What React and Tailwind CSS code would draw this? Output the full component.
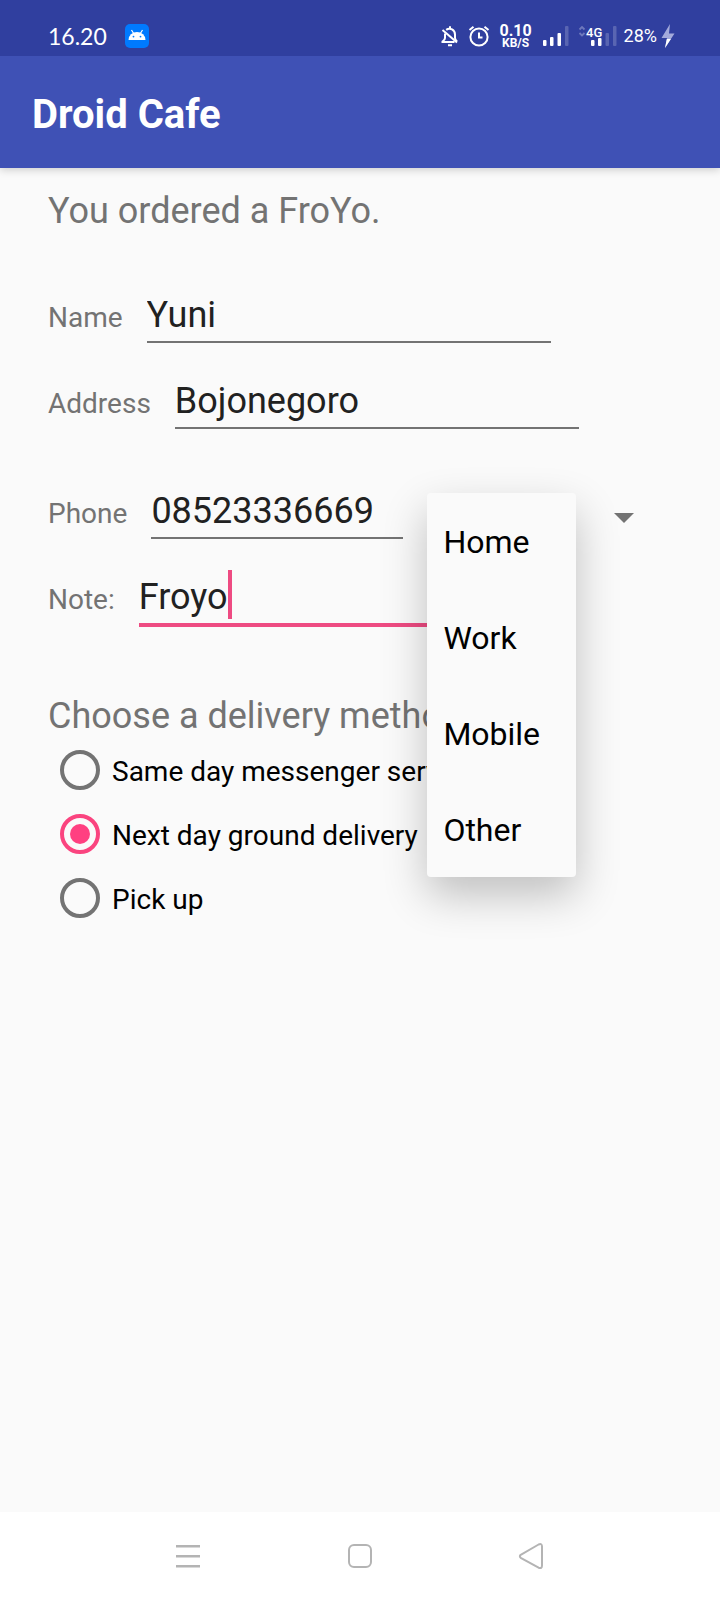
import React, { useState } from 'react';

function StatusBar() {
  return (
    <div className="flex h-14 items-center justify-between bg-[#303f9f] pt-4 pr-[45px] pl-12 text-white">
      <div className="flex items-center gap-[17px]">
        <span className="font-[Lato,sans-serif] text-[23px] leading-6">16.20</span>
        <svg width="26" height="26" viewBox="0 0 26 26" aria-hidden="true">
          <rect x="1" y="1" width="24" height="24" rx="5" fill="#007aff" />
          <path d="M7.500 7l2 3.200M18.500 7l-2 3.200" stroke="#fff" strokeWidth="1.200" />
          <path d="M4.500 17a8.500 8 0 0 1 17 0z" fill="#fff" />
          <circle cx="9.500" cy="13.600" r="0.900" fill="#007aff" />
          <circle cx="16.500" cy="13.600" r="0.900" fill="#007aff" />
        </svg>
      </div>

      <div className="flex items-center">
        <svg width="20" height="22" viewBox="0 0 20 22" fill="none" stroke="#fff" strokeWidth="2" aria-hidden="true">
          <path d="M6.200 4.900C10 2 15 5 15 9.500v3.500c0 1.500 1 2.500 2 3.500M5 8.500v4.500c0 1.800-1.200 2.700-2.500 3.500v.4H14.500" />
          <path d="M2.500 5l14.500 12.500" />
          <path d="M10 3.500V1.300M8 20.200h4" />
        </svg>
        <svg className="ml-2" width="22" height="22" viewBox="0 0 22 22" fill="none" stroke="#fff" strokeWidth="2" aria-hidden="true">
          <circle cx="11" cy="12" r="8.600" />
          <path d="M11 7.500V12.600h3.500M1.500 5L5.500 1.700M20.500 5L16.500 1.700" />
        </svg>
        <div className="ml-2.5 flex w-8 flex-col items-center font-[Roboto,sans-serif] font-bold">
          <span className="text-base leading-[14px]">0.10</span>
          <span className="text-xs leading-[10px]">KB/S</span>
        </div>
        <svg className="ml-2.5" width="28" height="22" viewBox="0 0 28 22" fill="#fff" aria-hidden="true">
          <rect x="1" y="15" width="3.500" height="6" rx="1" />
          <rect x="8" y="12" width="3.500" height="9" rx="1" />
          <rect x="15.500" y="8" width="3.500" height="13" rx="1" />
          <rect x="23" y="1" width="3.500" height="20" rx="1" opacity="0.2" />
        </svg>
        <svg className="ml-2" width="40" height="22" viewBox="0 0 40 22" fill="#fff" aria-hidden="true">
          <path d="M1.500 4.500l2.500-2.500 2.500 2.500M1.500 8l2.500 2.500 2.500-2.500" fill="none" stroke="#fff" strokeWidth="1.800" opacity="0.3" />
          <text x="8" y="12" className="font-[Roboto,sans-serif] text-[13px] font-medium">4G</text>
          <rect x="13" y="15" width="3.500" height="6" rx="1" />
          <rect x="20" y="13" width="3.500" height="8" rx="1" />
          <rect x="27.500" y="8" width="3.500" height="13" rx="1" opacity="0.2" />
          <rect x="35" y="1" width="3.500" height="20" rx="1" opacity="0.2" />
        </svg>
        <span className="ml-1.5 font-[Roboto,sans-serif] text-lg leading-6">28%</span>
        <svg className="ml-1" width="14" height="24" viewBox="0 0 14 24" aria-hidden="true">
          <path d="M9 0L0.500 14H6L4 24 13.500 9.500H8z" fill="#a3aadb" />
          <path d="M5.800 15h4.100L4 24z" fill="#fff" />
        </svg>
      </div>
    </div>
  );
}

function FieldLabel({ htmlFor, children }) {
  return (
    <label htmlFor={htmlFor} className="text-[28px] leading-[33px] text-[#737373]">
      {children}
    </label>
  );
}

function TextField({ id, label, value, onChange, type = 'text', width = 'w-[404px]' }) {
  return (
    <>
      <FieldLabel htmlFor={id}>{label}</FieldLabel>
      <input
        id={id}
        type={type}
        value={value}
        onChange={(e) => onChange(e.target.value)}
        className={`${width} h-[49px] min-w-0 border-b-2 border-[#737373] bg-transparent pb-[5px] text-4xl leading-[42px] text-[#212121] outline-none`}
      />
    </>
  );
}

const phoneTypes = ['Home', 'Work', 'Mobile', 'Other'];
const deliveryMethods = ['Same day messenger service', 'Next day ground delivery', 'Pick up'];

export default function App() {
  const [name, setName] = useState('Yuni');
  const [address, setAddress] = useState('Bojonegoro');
  const [phone, setPhone] = useState('08523336669');
  const [note, setNote] = useState('Froyo');
  const [phoneType, setPhoneType] = useState('Home');
  const [menuOpen, setMenuOpen] = useState(true);
  const [delivery, setDelivery] = useState(deliveryMethods[1]);

  return (
    <div className="flex min-h-screen flex-col bg-[#fafafa] font-[Roboto,sans-serif]">
      <header className="shadow-[0_2px_8px_rgba(0,0,0,0.18)]">
        <StatusBar />
        <div className="flex h-28 items-center bg-[#3f51b5] px-8 pt-1.5">
          <h1 className="text-[40px] leading-[48px] font-bold text-white">Droid Cafe</h1>
        </div>
      </header>

      <main className="flex-1 px-12 pt-[22px]">
        <h2 className="text-4xl leading-[42px] text-[#737373]">You ordered a FroYo.</h2>

        <form className="mt-[62px]" onSubmit={(e) => e.preventDefault()}>
          <div className="flex items-baseline gap-6">
            <TextField id="name" label="Name" value={name} onChange={setName} />
          </div>
          <div className="mt-[37px] flex items-baseline gap-6">
            <TextField id="address" label="Address" value={address} onChange={setAddress} />
          </div>
          <div className="mt-[61px] flex items-baseline gap-6">
            <TextField id="phone" type="tel" label="Phone" width="w-[252px]" value={phone} onChange={setPhone} />
            <div className="relative flex h-12 w-[221px] items-center self-start pt-2">
              <select
                aria-label="Phone type"
                value={phoneType}
                onChange={(e) => setPhoneType(e.target.value)}
                className="w-full appearance-none bg-transparent pl-4 text-[28px] leading-8 text-black outline-none"
              >
                {phoneTypes.map((type) => (
                  <option key={type}>{type}</option>
                ))}
              </select>
              <svg className="pointer-events-none absolute top-[23px] right-3.5" width="20" height="10" viewBox="0 0 20 10" aria-hidden="true">
                <path d="M0 0h20L10 10z" fill="#737373" />
              </svg>
              {menuOpen && (
                <ul className="absolute top-[3px] left-0 z-10 w-[149px] rounded bg-[#fafafa] shadow-[0_18px_44px_rgba(0,0,0,0.24)]">
                  {phoneTypes.map((type) => (
                    <li key={type}>
                      <button
                        type="button"
                        onClick={() => {
                          setPhoneType(type);
                          setMenuOpen(false);
                        }}
                        className="flex h-24 w-full items-center px-4 pt-0.5 text-[32px] leading-[38px] text-black"
                      >
                        {type}
                      </button>
                    </li>
                  ))}
                </ul>
              )}
            </div>
          </div>
          <div className="mt-[37px] flex items-baseline gap-6">
            <FieldLabel htmlFor="note">Note:</FieldLabel>
            <div className="relative flex w-[404px] border-b-4 border-[#ee4b82] pb-[5px]">
              <input
                id="note"
                type="text"
                value={note}
                onChange={(e) => setNote(e.target.value)}
                className="h-[42px] [field-sizing:content] bg-transparent text-4xl leading-[42px] text-[#212121] caret-transparent outline-none"
              />
              <span className="relative w-1" aria-hidden="true">
                <span className="absolute -top-1.5 left-0 h-[49px] w-1 bg-[#ee4b82]" />
              </span>
            </div>
          </div>

          <fieldset className="mt-[68px]">
            <legend className="text-4xl leading-[42px] text-[#737373]">Choose a delivery method:</legend>
            <div className="pt-px">
              {deliveryMethods.map((method) => (
                <label key={method} className="flex h-16 items-center gap-3 pl-3 text-[28px] leading-[33px] text-black">
                  <input
                    type="radio"
                    name="delivery"
                    checked={delivery === method}
                    onChange={() => setDelivery(method)}
                    className="size-10 shrink-0 appearance-none rounded-full border-4 border-[#737373] bg-clip-content p-1.5 checked:border-[#fa447f] checked:bg-[#ff4081]"
                  />
                  <span className="pt-0.5">{method}</span>
                </label>
              ))}
            </div>
          </fieldset>
        </form>
      </main>

      <nav className="flex h-[88px] items-center justify-center bg-white text-[#b4b4b4]" aria-label="System">
        <button type="button" aria-label="Recent apps" className="flex w-[172px] justify-center">
          <svg width="26" height="28" viewBox="0 0 26 28" fill="none" stroke="currentColor" strokeWidth="2.400">
            <path d="M1 4.300h24M1 14.300h24M1 24.300h24" />
          </svg>
        </button>
        <button type="button" aria-label="Home" className="flex w-[172px] justify-center">
          <svg width="26" height="28" viewBox="0 0 26 28" fill="none" stroke="currentColor" strokeWidth="2">
            <rect x="2" y="3" width="22" height="22" rx="5" />
          </svg>
        </button>
        <button type="button" aria-label="Back" className="flex w-[172px] justify-center">
          <svg width="28" height="28" viewBox="0 0 28 28" fill="none" stroke="currentColor" strokeWidth="2" strokeLinejoin="round">
            <path d="M2.700 12.800L20.600 2.500Q24 1 24 4.500V23.500Q24 27 20.600 25.700L2.700 15.800Q1 14.300 2.700 12.800z" />
          </svg>
        </button>
      </nav>
    </div>
  );
}
